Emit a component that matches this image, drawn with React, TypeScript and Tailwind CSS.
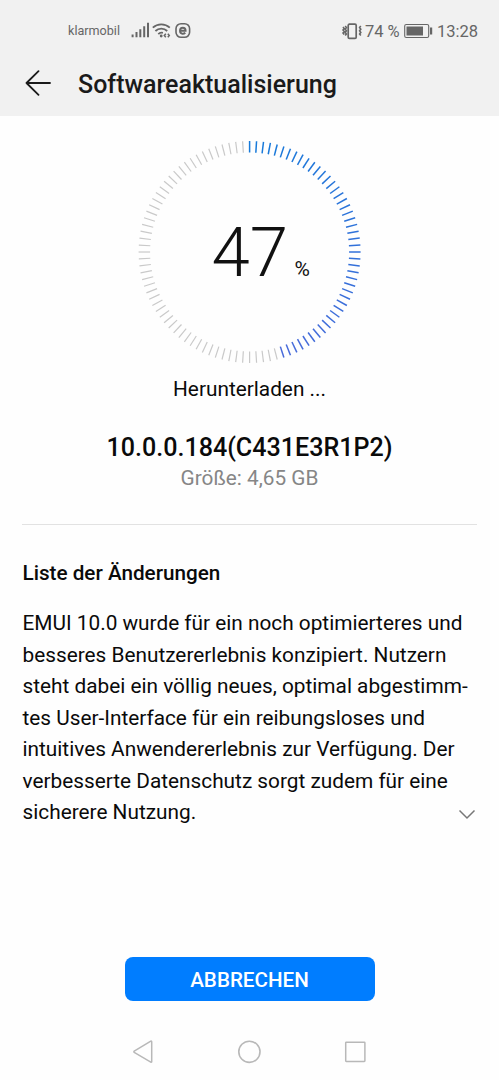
import React from 'react';

const TICKS = 100;
const ACTIVE_TICKS = 46;

const changelog = [
  'EMUI 10.0 wurde für ein noch optimierteres und',
  'besseres Benutzererlebnis konzipiert. Nutzern',
  'steht dabei ein völlig neues, optimal abgestimm-',
  'tes User-Interface für ein reibungsloses und',
  'intuitives Anwendererlebnis zur Verfügung. Der',
  'verbesserte Datenschutz sorgt zudem für eine',
  'sicherere Nutzung.',
];

// blue drifts towards violet at the end of the arc
const tickColor = (i: number) => {
  if (i >= ACTIVE_TICKS) return '#c9c9c9';
  const t = i / (ACTIVE_TICKS - 1);
  return `rgb(${Math.round(22 + t * 50)}, ${Math.round(122 - t * 16)}, 218)`;
};

const StatusBar = () => (
  <div className="flex h-[61px] items-center justify-between pl-[68px] pr-[21px] text-[#666666]">
    <div className="flex items-center">
      <span className="w-[63px] whitespace-nowrap pt-px text-[12.6px]">klarmobil</span>
      <svg className="h-[18px] w-[60px]" viewBox="0 0 60 18" fill="none" stroke="currentColor">
        <path d="M1.6 16.3v-2.8M5.5 16.3v-5.3M9.3 16.3V8.2M13.2 16.3V5.2M17 16.3V1.8" strokeWidth="2" />
        <path d="M21.8 6.7a12.4 12.4 0 0 1 17 0M24.4 10a8.4 8.4 0 0 1 11.8 0M27.3 13.1a4.6 4.6 0 0 1 4.6-1.2" strokeWidth="1.8" />
        <circle cx="30.2" cy="15" r="1.4" fill="currentColor" stroke="none" />
        <path d="m34.8 12.7-1.5 1.8 1.5 1.8M36.8 12.7l1.5 1.8-1.5 1.8" strokeWidth="1.5" />
        <rect x="45" y="2.7" width="13.6" height="13.6" rx="5" strokeWidth="1.6" />
        <path d="M49 9.7h5.6c0-4-5.6-4-5.6 0 0 3.4 3.4 3.8 5.3 2" strokeWidth="1.9" />
      </svg>
    </div>
    <div className="flex items-center text-[16.5px]">
      <svg className="mr-[2px] h-[18px] w-[21px]" viewBox="0 0 21 18" fill="none" stroke="currentColor">
        <rect x="6.2" y="2.2" width="8" height="14.2" rx="1.2" strokeWidth="1.7" />
        <path d="m1 5 1.2 1.5L1 8l1.2 1.5L1 11l1.2 1.5M3.2 4l1.2 1.6-1.2 1.6 1.2 1.6-1.2 1.6 1.2 1.6-1.2 1.6M18.8 4l-1.2 1.6 1.2 1.6-1.2 1.6 1.2 1.6-1.2 1.6 1.2 1.6" strokeWidth="1.6" />
      </svg>
      <span className="w-[39px] whitespace-nowrap pt-[3px]">74 %</span>
      <svg className="h-[16px] w-[29px]" viewBox="0 0 29 16">
        <rect x="0.7" y="1.5" width="24" height="13" rx="1.6" fill="none" stroke="currentColor" strokeWidth="1.1" />
        <rect x="2.5" y="3.5" width="16.5" height="9" fill="currentColor" />
        <rect x="26" y="4.5" width="2.2" height="7" fill="currentColor" />
      </svg>
      <span className="ml-1 whitespace-nowrap pt-[3px]">13:28</span>
    </div>
  </div>
);

const ProgressRing = () => (
  <div className="relative mt-[24px] h-[224px] w-[224px]">
    <svg className="h-full w-full" viewBox="0 0 224 224">
      {Array.from({ length: TICKS }, (_, i) => (
        <line
          key={i}
          x1="111.6"
          y1="1"
          x2="111.6"
          y2="12.5"
          stroke={tickColor(i)}
          strokeWidth={i < ACTIVE_TICKS ? 1.5 : 1.2}
          transform={`rotate(${i * 3.6} 111.6 112)`}
        />
      ))}
    </svg>
    <div className="absolute left-[74px] top-[68px] flex items-baseline text-[#111]">
      <span className="w-[83px] text-[69px] font-light leading-[90px]">47</span>
      <span className="text-[21px]">%</span>
    </div>
  </div>
);

const NavBar = () => (
  <div className="mt-[39px] flex items-center justify-center gap-[83px] pr-px text-[#b8b8b8]">
    <svg className="h-6 w-6" viewBox="0 0 24 24" fill="none" stroke="currentColor" strokeWidth="1.5">
      <path d="M21.7 1.700v20a.6.6 0 0 1-.9.5L4.200 12.300a.7.7 0 0 1 0-1.200L20.800 1.200a.6.6 0 0 1 .9.5Z" />
    </svg>
    <svg className="h-6 w-6" viewBox="0 0 24 24" fill="none" stroke="currentColor" strokeWidth="1.6">
      <circle cx="12.4" cy="11.8" r="10.6" />
    </svg>
    <svg className="h-6 w-6" viewBox="0 0 24 24" fill="none" stroke="currentColor" strokeWidth="1.5">
      <rect x="1.7" y="2.2" width="19.2" height="19.2" rx="0.6" />
    </svg>
  </div>
);

export default function App() {
  return (
    <div className="flex h-[1080px] w-[499px] flex-col overflow-hidden bg-[#fefefe] font-['Roboto',sans-serif] text-[#0a0a0a]">
      <header className="h-[116px] shrink-0 bg-[#f1f1f1]">
        <StatusBar />
        <div className="flex h-[46px] items-center pl-[25px]">
          <svg className="mb-[2px] h-[26px] w-[27px]" viewBox="0 0 27 26" fill="none" stroke="#1a1a1a" strokeWidth="1.8" strokeLinecap="round" strokeLinejoin="round">
            <path d="M25 13H1.5M13.5 1.2 1.5 13l12 11.8" />
          </svg>
          <h1 className="ml-[26px] whitespace-nowrap pt-[2px] text-[25px] font-medium text-[#1a1a1a]">Softwareaktualisierung</h1>
        </div>
      </header>

      <main className="flex flex-col items-center">
        <ProgressRing />
        <p className="mt-[9px] text-[20.8px] leading-8">Herunterladen ...</p>
        <p className="mt-[27px] text-[25.1px] font-medium leading-8">10.0.0.184(C431E3R1P2)</p>
        <p className="text-[20.8px] leading-[29px] text-[#868686]">Größe: 4,65 GB</p>
        <div className="mt-[31px] h-px w-[455px] bg-[#e2e2e2]" />

        <section className="mt-[32px] w-[454px]">
          <h2 className="text-[20.7px] font-medium leading-8">Liste der Änderungen</h2>
          <div className="relative mt-[19px] text-[20.8px] leading-[31.5px]">
            {changelog.map((line) => (
              <p key={line} className="whitespace-nowrap">{line}</p>
            ))}
            <svg className="absolute bottom-[9px] right-[1px] h-[11px] w-[18px]" viewBox="0 0 18 11" fill="none" stroke="#777" strokeWidth="1.5">
              <path d="m1.5 1.5 7.5 7.5 7.5-7.5" />
            </svg>
          </div>
        </section>

        <button className="mt-[128px] h-[44px] w-[250px] rounded-lg bg-[#007dff] pt-[3px] text-[20.6px] font-medium text-white">
          ABBRECHEN
        </button>
      </main>
      <NavBar />
    </div>
  );
}
